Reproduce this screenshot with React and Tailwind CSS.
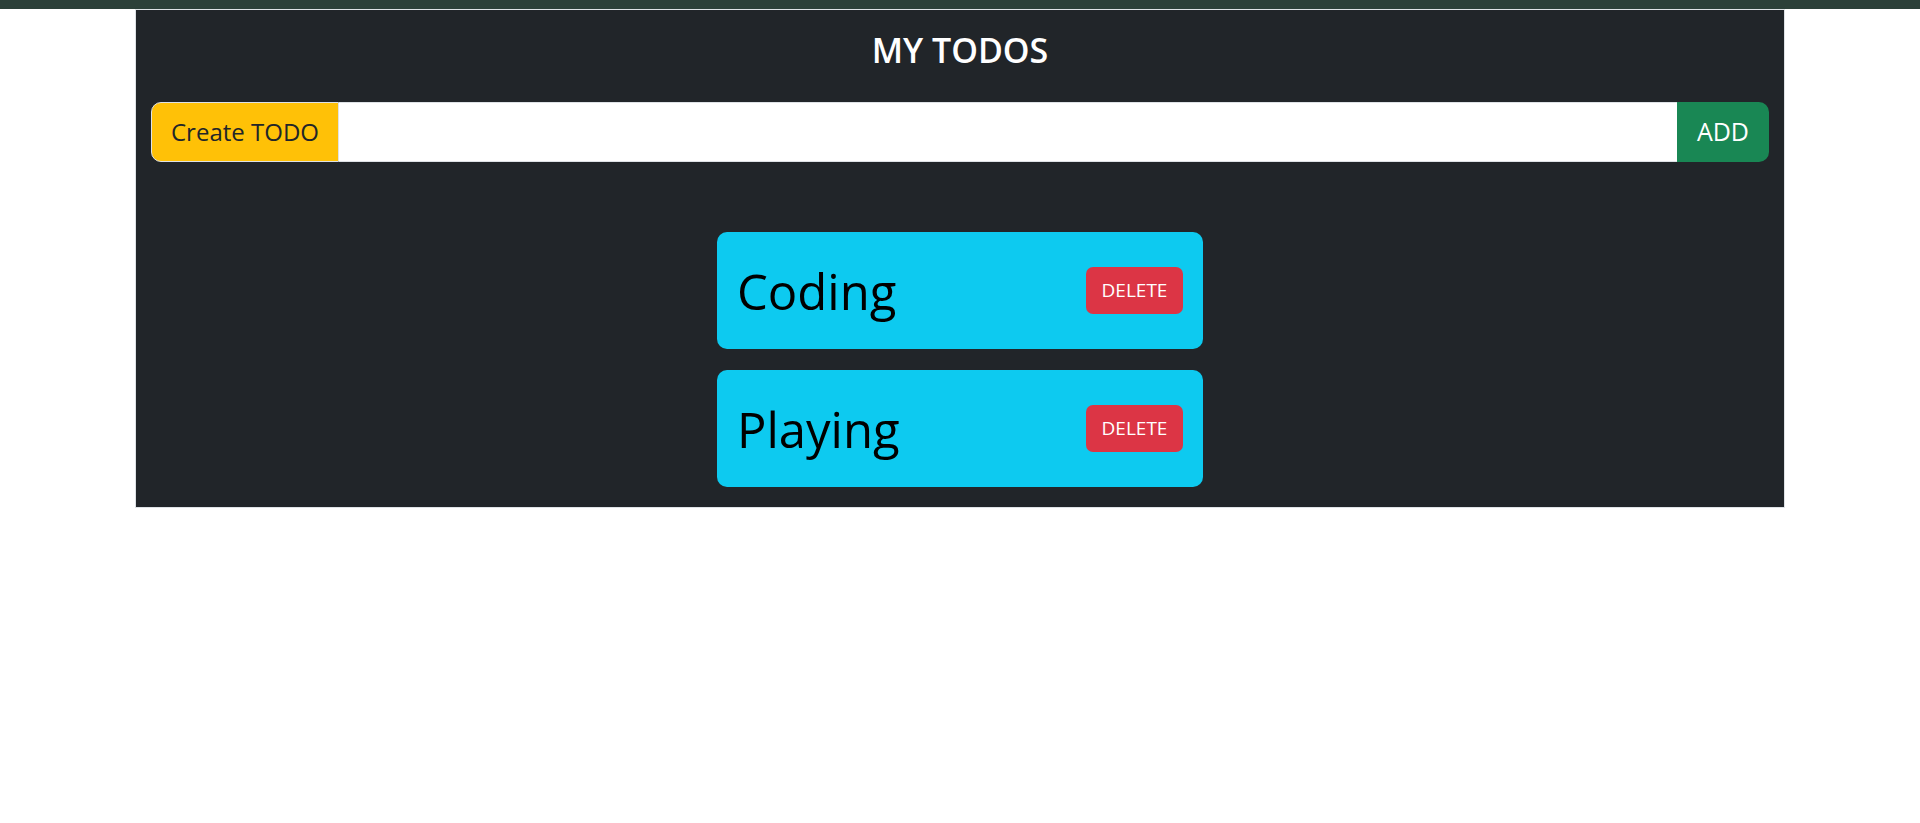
import { useState } from 'react';

export default function App() {
  const [todos, setTodos] = useState(['Coding', 'Playing']);
  const [text, setText] = useState('');

  const addTodo = () => {
    if (!text.trim()) return;
    setTodos([...todos, text.trim()]);
    setText('');
  };

  return (
    <div className="min-h-[823px] bg-white font-['Open_Sans',sans-serif]">
      <div className="h-[9px] bg-[#2c4039]" />

      <div className="mx-auto w-[1650px] border border-[#dee2e6] bg-[#212529] px-[15px] pb-[20px]">
        <h3 className="pt-[20px] text-center text-[34px] font-semibold leading-[40px] text-white">MY TODOS</h3>

        {/* Input group */}
        <div className="mt-[32px] flex h-[60px]">
          <span className="flex items-center rounded-l-[10px] border border-[#dee2e6] bg-[#ffc107] px-[19px] text-[24px] text-[#212529]">
            Create TODO
          </span>
          <input
            value={text}
            onChange={(e) => setText(e.target.value)}
            className="min-w-0 flex-1 border-y border-[#dee2e6] bg-white px-4 text-[24px] outline-none"
          />
          <button
            onClick={addTodo}
            className="rounded-r-[10px] bg-[#198754] px-[20px] text-[25px] text-white"
          >
            ADD
          </button>
        </div>

        {/* Todo list */}
        <div className="mt-[70px] flex flex-col items-center gap-[21px]">
          {todos.map((todo, idx) => (
            <div
              key={idx}
              className="flex h-[117px] w-[486px] items-center justify-between rounded-[10px] bg-[#0dcaf0] px-[20px]"
            >
              <h1 className="text-[49px] leading-[60px] text-black">{todo}</h1>
              <button
                onClick={() => setTodos(todos.filter((_, i) => i !== idx))}
                className="h-[47px] w-[97px] rounded-[7px] bg-[#dc3545] text-[19px] text-white"
              >
                DELETE
              </button>
            </div>
          ))}
        </div>
      </div>
    </div>
  );
}
